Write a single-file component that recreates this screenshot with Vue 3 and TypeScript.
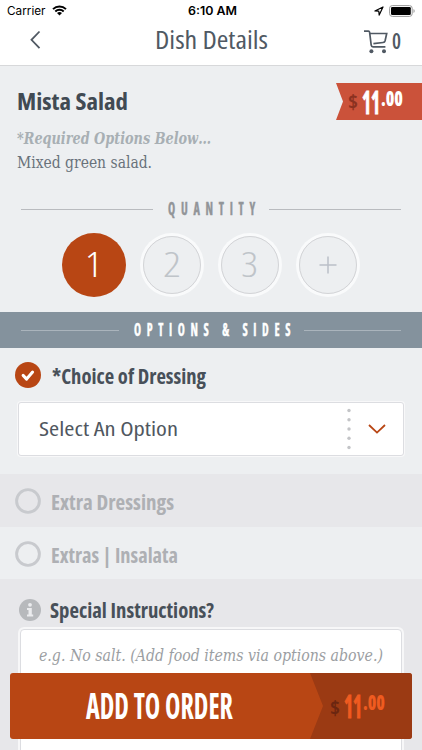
<script setup lang="ts">
import { h, ref, type FunctionalComponent } from 'vue'

interface FitProps {
  text: string
  width: number
  height: number
  base: number
}

// Condensed lettering: one line of text set to an exact width.
const Fit: FunctionalComponent<FitProps> = (props) =>
  h(
    'svg',
    { width: props.width, height: props.height, style: { display: 'block', overflow: 'visible', flex: 'none' } },
    [
      h(
        'text',
        { x: 0, y: props.base, textLength: props.width, lengthAdjust: 'spacingAndGlyphs', fill: 'currentColor' },
        props.text,
      ),
    ],
  )
Fit.props = ['text', 'width', 'height', 'base']

const quantities = [
  { label: '1', width: 17 },
  { label: '2', width: 18 },
  { label: '3', width: 17 },
]
const selected = ref('1')

const extras = [
  { label: 'Extra Dressings', width: 123 },
  { label: 'Extras | Insalata', width: 127 },
]
</script>

<template>
  <div class="screen">
    <div class="status">
      <div class="carrier">
        <Fit class="carrier-text" text="Carrier" :width="38.5" :height="20" :base="15" />
        <svg class="wifi" width="15" height="11" viewBox="0 0 15 11">
          <path d="M1 4.1a9.4 9.4 0 0 1 13 0M3.3 6.5a6.1 6.1 0 0 1 8.4 0" fill="none" stroke="#000" stroke-width="2" />
          <path d="M7.5 10.6 5 8.1a3.6 3.6 0 0 1 5 0z" />
        </svg>
      </div>
      <Fit class="clock" text="6:10 AM" :width="49" :height="20" :base="15" />
      <div class="indicators">
        <svg width="10" height="10" viewBox="0 0 10 10">
          <path d="M.9 5 9 1 5.2 9.1 4.8 5.2z" fill="none" stroke="#000" stroke-width="1.2" stroke-linejoin="round" />
        </svg>
        <svg width="27" height="12" viewBox="0 0 27 12">
          <rect x=".6" y=".6" width="22.6" height="10.8" rx="2.7" fill="#fff" stroke="#999" />
          <rect x="2" y="2" width="19.8" height="8" rx="1.2" />
          <path d="M24.5 4v4c1.6-.6 1.6-3.4 0-4" fill="#999" />
        </svg>
      </div>
    </div>

    <header class="header">
      <svg class="back" width="12" height="20" viewBox="0 0 12 20">
        <path d="M10.5 1.5 2.5 9.8l8 8.3" fill="none" stroke="#505963" stroke-width="1.8" />
      </svg>
      <Fit class="title" text="Dish Details" :width="113" :height="43" :base="27.3" />
      <div class="cart">
        <svg width="24" height="24" viewBox="0 0 24 24" fill="none" stroke="#505963" stroke-width="1.7">
          <path d="M0 1.2h4.4q1 0 1.2 1l1.6 13q.2 1.6 1.8 1.6h12.4M5.7 3.5h17l-1.6 7.2q-.4 1.6-2 1.8L9.4 13.7" />
          <circle cx="7.4" cy="21.3" r="2" fill="#505963" stroke="none" />
          <circle cx="20" cy="21.3" r="2" fill="#505963" stroke="none" />
        </svg>
        <Fit class="count" text="0" :width="9" :height="24" :base="19" />
      </div>
    </header>

    <section class="dish">
      <div class="summary">
        <Fit class="name" text="Mista Salad" :width="111" :height="34" :base="25.5" />
        <Fit class="required" text="*Required Options Below…" :width="194" :height="24" :base="26" />
        <Fit class="description" text="Mixed green salad." :width="135" :height="24" :base="25.5" />
      </div>
      <div class="tag">
        <Fit class="dollar" text="$" :width="10" :height="37" :base="26" />
        <Fit class="whole" text="11" :width="18" :height="37" :base="30.5" />
        <Fit class="cents" text=".00" :width="22" :height="37" :base="22.5" />
      </div>
    </section>

    <section class="quantity">
      <div class="heading">
        <i class="rule"></i>
        <Fit class="heading-text" text="QUANTITY" :width="93" :height="20" :base="15.5" />
        <i class="rule"></i>
      </div>
      <div class="choices">
        <button
          v-for="q in quantities"
          :key="q.label"
          :class="['round', { active: selected === q.label }]"
          @click="selected = q.label"
        >
          <Fit class="digit" :text="q.label" :width="q.width" :height="36" :base="30" />
        </button>
        <button class="round" aria-label="More">
          <svg width="18" height="18" viewBox="0 0 18 18">
            <path d="M9 .5v17M.5 9h17" stroke="#bbc0c7" stroke-width="1.5" />
          </svg>
        </button>
      </div>
    </section>

    <div class="heading options">
      <i class="rule"></i>
      <Fit class="heading-text" text="OPTIONS &amp; SIDES" :width="162" :height="20" :base="15.8" />
      <i class="rule"></i>
    </div>

    <section class="dressing">
      <div class="row">
        <svg width="26" height="26" viewBox="0 0 26 26">
          <circle cx="13" cy="13" r="13" fill="#b84614" />
          <path d="m8.1 13.4 3.5 3.7 6-7" fill="none" stroke="#fff" stroke-width="3" stroke-linecap="round" stroke-linejoin="round" />
        </svg>
        <Fit class="label" text="*Choice of Dressing" :width="154" :height="26" :base="21.6" />
      </div>
      <div class="select">
        <Fit class="select-text" text="Select An Option" :width="139" :height="30" :base="22" />
        <svg class="dots" width="4" height="42" viewBox="0 0 4 42" fill="#c3c4c7">
          <circle v-for="n in 5" :key="n" cx="2" :cy="2.5 + (n - 1) * 9.25" r="1.7" />
        </svg>
        <svg width="18" height="10" viewBox="0 0 18 10">
          <path d="m1 1 8 7.6L17 1" fill="none" stroke="#b84614" stroke-width="1.8" />
        </svg>
      </div>
    </section>

    <div v-for="item in extras" :key="item.label" class="extra">
      <svg width="26" height="26" viewBox="0 0 26 26">
        <circle cx="13" cy="13" r="11.4" fill="none" stroke="#c8cace" stroke-width="2.9" />
      </svg>
      <Fit class="label" :text="item.label" :width="item.width" :height="26" :base="21.5" />
    </div>

    <section class="special">
      <div class="row">
        <svg width="22" height="22" viewBox="0 0 22 22">
          <circle cx="11" cy="11" r="11" fill="#b7b9bc" />
          <circle cx="11" cy="5.8" r="1.9" fill="#ebecee" />
          <path d="M8 8.9h4.8v6.5h1.4v2H8v-2h1.5v-4.5H8z" fill="#ebecee" />
        </svg>
        <Fit class="label" text="Special Instructions?" :width="164" :height="22" :base="18.5" />
      </div>
      <div class="note">
        <Fit class="placeholder" text="e.g. No salt. (Add food items via options above.)" :width="344" :height="30" :base="20.5" />
      </div>
    </section>

    <button class="order">
      <Fit class="order-text" text="ADD TO ORDER" :width="147" :height="66" :base="46" />
      <span class="total">
        <Fit class="dollar" text="$" :width="10" :height="66" :base="42" />
        <Fit class="whole" text="11" :width="18" :height="66" :base="45" />
        <Fit class="cents" text=".00" :width="22" :height="66" :base="36.7" />
      </span>
    </button>
  </div>
</template>

<style>
body {
  margin: 0;
}
</style>

<style scoped>
.screen {
  position: relative;
  width: 422px;
  height: 750px;
  overflow: hidden;
  background: #edeff1;
  color: #485059;
  font-family: 'Open Sans', 'Noto Sans', sans-serif;
  font-stretch: 75%;
}
button {
  padding: 0;
  border: 0;
  font: inherit;
  font-stretch: inherit;
}
.status {
  display: grid;
  grid-template-columns: 1fr 48px 1fr;
  height: 22px;
  padding: 0 6px 0 7px;
  background: #fff;
  color: #000;
  font-family: Inter, sans-serif;
  font-stretch: normal;
}
.carrier {
  display: flex;
  gap: 6px;
}
.carrier-text {
  font-size: 11.5px;
}
.wifi {
  margin-top: 5px;
}
.clock {
  font-size: 11.8px;
  font-weight: 600;
}
.indicators {
  display: flex;
  align-items: center;
  justify-content: flex-end;
  gap: 5px;
}
.header {
  display: grid;
  grid-template-columns: 1fr 113px 1fr;
  height: 43px;
  border-bottom: 1px solid #d7d8da;
  background: #fff;
  color: #505963;
}
.back {
  margin: 8px 0 0 29px;
}
.title {
  font-size: 26px;
  font-weight: 400;
}
.cart {
  display: flex;
  justify-content: flex-end;
  gap: 4px;
  padding: 8px 21px 0 0;
}
.count {
  font-size: 22px;
  font-weight: 600;
}
.dish {
  display: flex;
  justify-content: space-between;
  height: 133px;
}
.summary {
  padding: 18px 0 0 17px;
}
.name {
  color: #414a53;
  font-size: 22.5px;
  font-weight: 700;
}
.required,
.description,
.placeholder {
  font-family: 'DejaVu Serif', 'Liberation Serif', serif;
  font-size: 16.2px;
}
.required {
  color: #a8afb4;
  font-weight: 700;
  font-style: italic;
}
.description {
  color: #69727b;
}
.tag {
  display: flex;
  width: 74px;
  height: 37px;
  margin-top: 17px;
  padding-left: 12px;
  background: #cb523a;
  clip-path: polygon(0 0, 100% 0, 100% 100%, 0 100%, 7px 50%);
  color: #fff;
}
.dollar {
  margin-right: 3.5px;
  color: #8b3120;
  font-size: 20px;
  font-weight: 700;
}
.whole {
  margin-right: 1px;
  font-size: 32px;
  font-weight: 700;
  stroke: currentColor;
  stroke-width: 1px;
}
.cents {
  font-size: 21px;
  font-weight: 800;
}
.quantity {
  height: 113px;
}
.heading {
  display: flex;
  align-items: center;
  gap: 15px;
  height: 20px;
  padding: 0 21px;
  color: #929599;
}
.rule {
  flex: 1;
  height: 1px;
  background: #b9bbbf;
}
.heading-text {
  margin-right: -7px;
  font-size: 17px;
  font-weight: 700;
  letter-spacing: 8px;
  stroke: currentColor;
  stroke-width: 0.4px;
}
.choices {
  display: flex;
  align-items: center;
  justify-content: center;
  gap: 14px;
  width: 421px;
  margin-top: 14px;
}
.round {
  display: flex;
  align-items: center;
  justify-content: center;
  width: 58px;
  height: 58px;
  margin: 3px;
  border: 1px solid #d3d4d7;
  border-radius: 50%;
  box-sizing: border-box;
  background: transparent;
  box-shadow: 0 0 0 3px #f9fafb;
  color: #bfc4c9;
}
.round.active {
  width: 64px;
  height: 64px;
  margin: 0;
  border: 0;
  background: #b84614;
  box-shadow: none;
  color: #fff;
}
.digit {
  font-size: 35px;
  font-weight: 300;
}
.options {
  height: 36px;
  background: #84929d;
  color: #fff;
}
.options .rule {
  background: #aab4bc;
}
.dressing {
  height: 126px;
}
.row {
  display: flex;
  gap: 11px;
  padding: 14px 0 0 15px;
}
.label {
  font-size: 20.5px;
  font-weight: 700;
}
.select {
  display: flex;
  align-items: center;
  height: 52px;
  margin: 14px 18px 0;
  padding: 0 17px 0 20px;
  border: 1px solid #dcdde1;
  border-radius: 3px;
  box-sizing: content-box;
  background: #fff;
  box-shadow: 0 0 0 1px #f8f8f9;
  color: #505760;
}
.select-text {
  font-size: 20.5px;
}
.dots {
  margin: 0 17px 0 auto;
}
.extra {
  display: flex;
  gap: 10px;
  height: 39px;
  padding: 14px 0 0 15px;
  background: #e7e7ea;
  color: #aeb0b4;
}
.extra + .extra {
  height: 38px;
  background: #edeff1;
}
.special {
  height: 171px;
  background: #e7e7ea;
}
.special .row {
  padding: 20px 0 0 19px;
  gap: 9px;
}
.note {
  height: 150px;
  margin: 8px 20px 0;
  padding: 10px 18px;
  border: 1px solid #dcdde1;
  border-radius: 4px;
  background: #fff;
  box-shadow: 0 0 0 2px #f7f7f8;
  color: #9b9ea2;
}
.placeholder {
  font-style: italic;
}
.order {
  position: absolute;
  left: 10px;
  right: 10px;
  bottom: 11px;
  display: flex;
  justify-content: space-between;
  height: 66px;
  padding-left: 76px;
  border-radius: 3px;
  overflow: hidden;
  background: #b84614;
  color: #fff;
}
.order-text {
  font-size: 35.5px;
  font-weight: 700;
}
.total {
  display: flex;
  width: 82px;
  padding-left: 20px;
  background: #9b3a13;
  clip-path: polygon(0 0, 100% 0, 100% 100%, 0 100%, 13px 50%);
  color: #ef5b20;
}
.total .dollar {
  color: #6b2610;
}
</style>
